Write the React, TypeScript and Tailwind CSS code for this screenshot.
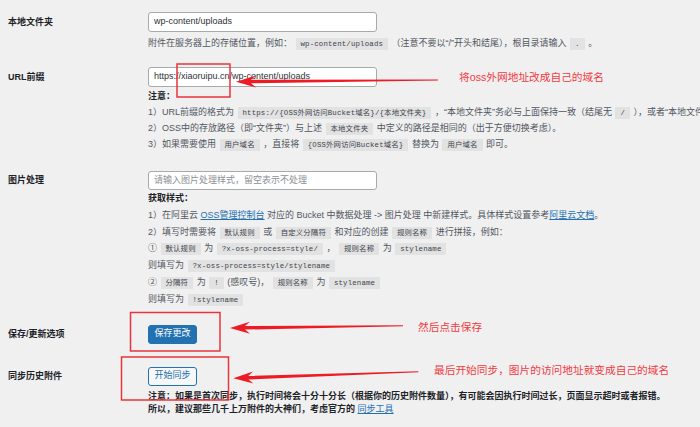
import React from "react";

const C = ({ children }: { children: React.ReactNode }) => (
  <code className="font-['Liberation_Mono','Noto_Sans_CJK_SC',monospace] text-[7.4px] leading-none text-[#3c434a] bg-[#e2e2e3] px-[5px] py-[2px] mx-[1px] tracking-[0.15px]">
    {children}
  </code>
);

const A = ({ children }: { children: React.ReactNode }) => (
  <span className="text-[#2271b1] underline">{children}</span>
);

const Input = ({ value, placeholder, h }: { value?: string; placeholder?: string; h: string }) => (
  <div
    className={`${h} w-[229px] bg-white border border-[#a7aaad] rounded-[3px] flex items-center px-[5px] text-[9px] ${
      value ? "text-[#2c3338]" : "text-[#8c8f94]"
    }`}
  >
    {value ?? placeholder}
  </div>
);

const Row = ({
  label,
  lh,
  className,
  children,
}: {
  label: string;
  lh: string;
  className?: string;
  children: React.ReactNode;
}) => (
  <div className={`flex ${className ?? ""}`}>
    <div className={`w-[148px] shrink-0 pl-[8px] font-bold text-[#1d2327] text-[9px] ${lh}`}>{label}</div>
    <div className="flex-1 min-w-0 whitespace-nowrap">{children}</div>
  </div>
);

function arrowPts(tx: number, ty: number, ex: number, ey: number) {
  const L = 20,
    N = 15,
    W = 6,
    s0 = 1.8,
    s1 = 0.5;
  const dx = ex - tx,
    dy = ey - ty;
  const len = Math.hypot(dx, dy);
  const ux = dx / len,
    uy = dy / len;
  const nx = -uy,
    ny = ux;
  const p = (d: number, o: number) => `${(tx + ux * d + nx * o).toFixed(2)},${(ty + uy * d + ny * o).toFixed(2)}`;
  return [p(0, 0), p(L, W), p(N, s0), p(len, s1), p(len, -s1), p(N, -s0), p(L, -W)].join(" ");
}

export default function App() {
  return (
    <div className="relative w-[700px] h-[427px] overflow-hidden bg-[#f0f0f1] font-['Liberation_Sans','Noto_Sans_CJK_SC',sans-serif] text-[9px] text-[#50575e]">
      <div className="flex flex-col pt-[12px]">
        <Row label="本地文件夹" lh="leading-[20px]">
          <Input h="h-[20px]" value="wp-content/uploads" />
          <p className="mt-[3px] leading-[16px]">
            附件在服务器上的存储位置，例如： <C>wp-content/uploads</C> （注意不要以“/”开头和结尾），根目录请输入 <C>.</C> 。
          </p>
        </Row>

        <Row label="URL前缀" lh="leading-[20px]" className="mt-[16px]">
          <Input h="h-[20px]" value="https://xiaoruipu.cn/wp-content/uploads" />
          <div className="mt-[1px] leading-[16px]">
            <p className="font-bold text-[#1d2327]">注意：</p>
            <p>
              1）URL前缀的格式为 <C>https://{"{"}OSS外网访问Bucket域名{"}"}/{"{"}本地文件夹{"}"}</C> ，“本地文件夹”务必与上面保持一致（结尾无 <C>/</C> ），或者“本地文件夹”为空
            </p>
            <p>
              2）OSS中的存放路径（即“文件夹”）与上述 <C>本地文件夹</C> 中定义的路径是相同的（出于方便切换考虑）。
            </p>
            <p>
              3）如果需要使用 <C>用户域名</C> ，直接将 <C>{"{"}OSS外网访问Bucket域名{"}"}</C> 替换为 <C>用户域名</C> 即可。
            </p>
          </div>
        </Row>

        <Row label="图片处理" lh="leading-[19px]" className="mt-[19px]">
          <Input h="h-[19px]" placeholder="请输入图片处理样式，留空表示不处理" />
          <div className="leading-[16.8px]">
            <p className="font-bold text-[#1d2327]">获取样式：</p>
            <p>
              1）在阿里云 <A>OSS管理控制台</A> 对应的 Bucket 中数据处理 -&gt; 图片处理 中新建样式。具体样式设置参考<A>阿里云文档</A>。
            </p>
            <p>
              2）填写时需要将 <C>默认规则</C> 或 <C>自定义分隔符</C> 和对应的创建 <C>规则名称</C> 进行拼接，例如：
            </p>
            <p>
              ① <C>默认规则</C> 为 <C>?x-oss-process=style/</C> ， <C>规则名称</C> 为 <C>stylename</C>
            </p>
            <p>
              则填写为 <C>?x-oss-process=style/stylename</C>
            </p>
            <p>
              ② <C>分隔符</C> 为 <C>!</C> (感叹号)， <C>规则名称</C> 为 <C>stylename</C>
            </p>
            <p>
              则填写为 <C>!stylename</C>
            </p>
          </div>
        </Row>

        <Row label="保存/更新选项" lh="leading-[19px]" className="mt-[17px]">
          <button className="h-[19px] w-[49px] rounded-[3px] bg-[#2271b1] border border-[#2271b1] text-white text-[9px] flex items-center justify-center">
            保存更改
          </button>
        </Row>

        <Row label="同步历史附件" lh="leading-[19px]" className="mt-[23px]">
          <button className="h-[19px] w-[49px] rounded-[3px] bg-[#f6f7f7] border border-[#2271b1] text-[#2271b1] text-[9px] flex items-center justify-center">
            开始同步
          </button>
          <div className="mt-[4px] leading-[13px] text-[9px] text-[#1d2327]">
            <p className="font-bold">
              注意：如果是首次同步，执行时间将会十分十分长（根据你的历史附件数量），有可能会因执行时间过长，页面显示超时或者报错。
            </p>
            <p>
              <span className="font-bold">所以，建议那些几千上万附件的大神们，考虑官方的 </span>
              <A>同步工具</A>
            </p>
          </div>
        </Row>
      </div>

      <svg className="absolute inset-0 pointer-events-none" width="700" height="427" viewBox="0 0 700 427">
        <rect x="177" y="64" width="53" height="33" fill="none" stroke="#e8343c" strokeWidth="1.5" />
        <rect x="130.5" y="312.5" width="89.5" height="38.5" fill="none" stroke="#e8343c" strokeWidth="1.5" />
        <rect x="121.5" y="357" width="107" height="43" fill="none" stroke="#e8343c" strokeWidth="1.5" />
        <polygon points={arrowPts(236, 81.7, 438, 80)} fill="#ec1b24" />
        <polygon points={arrowPts(230, 328, 403, 325.7)} fill="#ec1b24" />
        <polygon points={arrowPts(233.3, 378.3, 418.3, 371.7)} fill="#ec1b24" />
      </svg>

      <span className="absolute left-[459px] top-[72px] leading-none text-[10.7px] text-[#f23a3f] whitespace-nowrap">
        将oss外网地址改成自己的域名
      </span>
      <span className="absolute left-[418px] top-[322px] leading-none text-[10.7px] text-[#f23a3f] whitespace-nowrap">
        然后点击保存
      </span>
      <span className="absolute left-[434px] top-[365px] leading-none text-[10.7px] text-[#f23a3f] whitespace-nowrap">
        最后开始同步，图片的访问地址就变成自己的域名
      </span>
    </div>
  );
}
